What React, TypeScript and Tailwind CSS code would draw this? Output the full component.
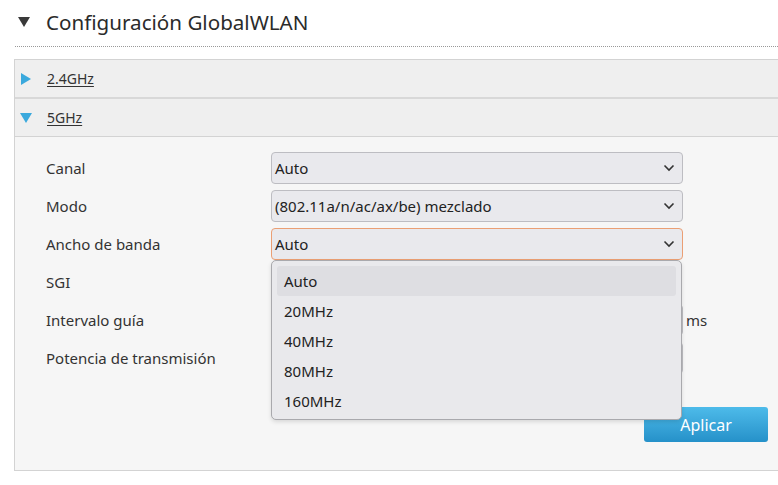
import React from 'react';

const Chevron: React.FC = () => (
  <svg width="12" height="8" viewBox="0 0 12 8" className="shrink-0">
    <polyline points="1.5,1.5 6,6 10.5,1.5" fill="none" stroke="#333" strokeWidth="1.6" />
  </svg>
);

const Select: React.FC<{ value: string; active?: boolean }> = ({ value, active }) => (
  <div
    className={`w-[412px] h-[32px] flex items-center justify-between pl-[3px] pr-[7px] rounded-[4px] border bg-[#e9e9ed] text-[15px] text-[#222] ${
      active ? 'border-[#eb9f74]' : 'border-[#bdbdc2]'
    }`}
  >
    <span>{value}</span>
    <Chevron />
  </div>
);

const OPTIONS = ['Auto', '20MHz', '40MHz', '80MHz', '160MHz'];

const App: React.FC = () => {
  return (
    <div
      className="w-[778px] h-[485px] bg-white overflow-hidden text-[#333]"
      style={{ fontFamily: '"Noto Sans", "Open Sans", sans-serif' }}
    >
      {/* Title */}
      <div className="flex items-center h-[46px] pl-[18px] pb-[2px]">
        <svg width="12" height="10" viewBox="0 0 12 10" className="mr-[16px]">
          <polygon points="0,0 12,0 6,10" fill="#3a3a3a" />
        </svg>
        <h1 className="text-[20.6px] text-[#2b2b2b] leading-none">Configuración GlobalWLAN</h1>
      </div>
      <div className="ml-[15px] border-t border-dotted border-[#999]" />

      {/* Panel */}
      <div className="ml-[14px] mt-[12px] border-l border-t border-b border-[#d3d3d3]">
        <div className="h-[39px] flex items-center bg-[#efefef] border-b-2 border-[#d8d8d8] pl-[6px]">
          <svg width="10" height="12" viewBox="0 0 10 12" className="mr-[16px]">
            <polygon points="0,0 10,6 0,12" fill="#3aa9dd" />
          </svg>
          <span className="text-[14px] underline underline-offset-2 text-[#333]">2.4GHz</span>
        </div>
        <div className="h-[38px] flex items-center bg-[#efefef] border-b border-[#d3d3d3] pl-[5px]">
          <svg width="12" height="10" viewBox="0 0 12 10" className="mr-[15px]">
            <polygon points="0,0 12,0 6,10" fill="#3aa9dd" />
          </svg>
          <span className="text-[14px] underline underline-offset-2 text-[#333]">5GHz</span>
        </div>

        <div className="bg-[#f6f6f6] h-[333px] pt-[15px] flex flex-col">
          <div className="flex flex-col gap-[6px]">
            <div className="flex items-center h-[32px]">
              <span className="w-[256px] pl-[31px] text-[15px]">Canal</span>
              <Select value="Auto" />
            </div>
            <div className="flex items-center h-[32px]">
              <span className="w-[256px] pl-[31px] text-[15px]">Modo</span>
              <Select value="(802.11a/n/ac/ax/be) mezclado" />
            </div>
            <div className="flex items-center h-[32px]">
              <span className="w-[256px] pl-[31px] text-[15px]">Ancho de banda</span>
              <div className="relative">
                <Select value="Auto" active />
                <div className="absolute left-0 top-full z-10 w-[411px] h-[160px] p-[5px] bg-[#e9e9ec] border border-[#a9a9ad] rounded-[5px] shadow-[0_2px_4px_rgba(0,0,0,0.12)]">
                  {OPTIONS.map((o, i) => (
                    <div
                      key={o}
                      className={`h-[30px] flex items-center pl-[7px] text-[15px] text-[#222] rounded-[3px] ${
                        i === 0 ? 'bg-[#dedee2]' : ''
                      }`}
                    >
                      {o}
                    </div>
                  ))}
                </div>
              </div>
            </div>
            <div className="flex items-center h-[32px]">
              <span className="w-[256px] pl-[31px] text-[15px]">SGI</span>
              <div className="w-[16px] h-[16px] border border-[#999] rounded-[2px] bg-white" />
            </div>
            <div className="flex items-center h-[32px]">
              <span className="w-[256px] pl-[31px] text-[15px]">Intervalo guía</span>
              <div className="w-[412px] h-[30px] border border-[#bdbdc2] rounded-[3px] bg-white" />
              <span className="ml-[3px] text-[15px]">ms</span>
            </div>
            <div className="flex items-center h-[32px]">
              <span className="w-[256px] pl-[31px] text-[15px]">Potencia de transmisión</span>
              <Select value="" />
            </div>
          </div>

          <div className="flex justify-end pr-[10px] mt-[33px]">
            <button className="w-[124px] h-[35px] rounded-[3px] text-white text-[16px] bg-gradient-to-b from-[#4dbbea] to-[#2591c9]">
              Aplicar
            </button>
          </div>
        </div>
      </div>
    </div>
  );
};

export default App;
